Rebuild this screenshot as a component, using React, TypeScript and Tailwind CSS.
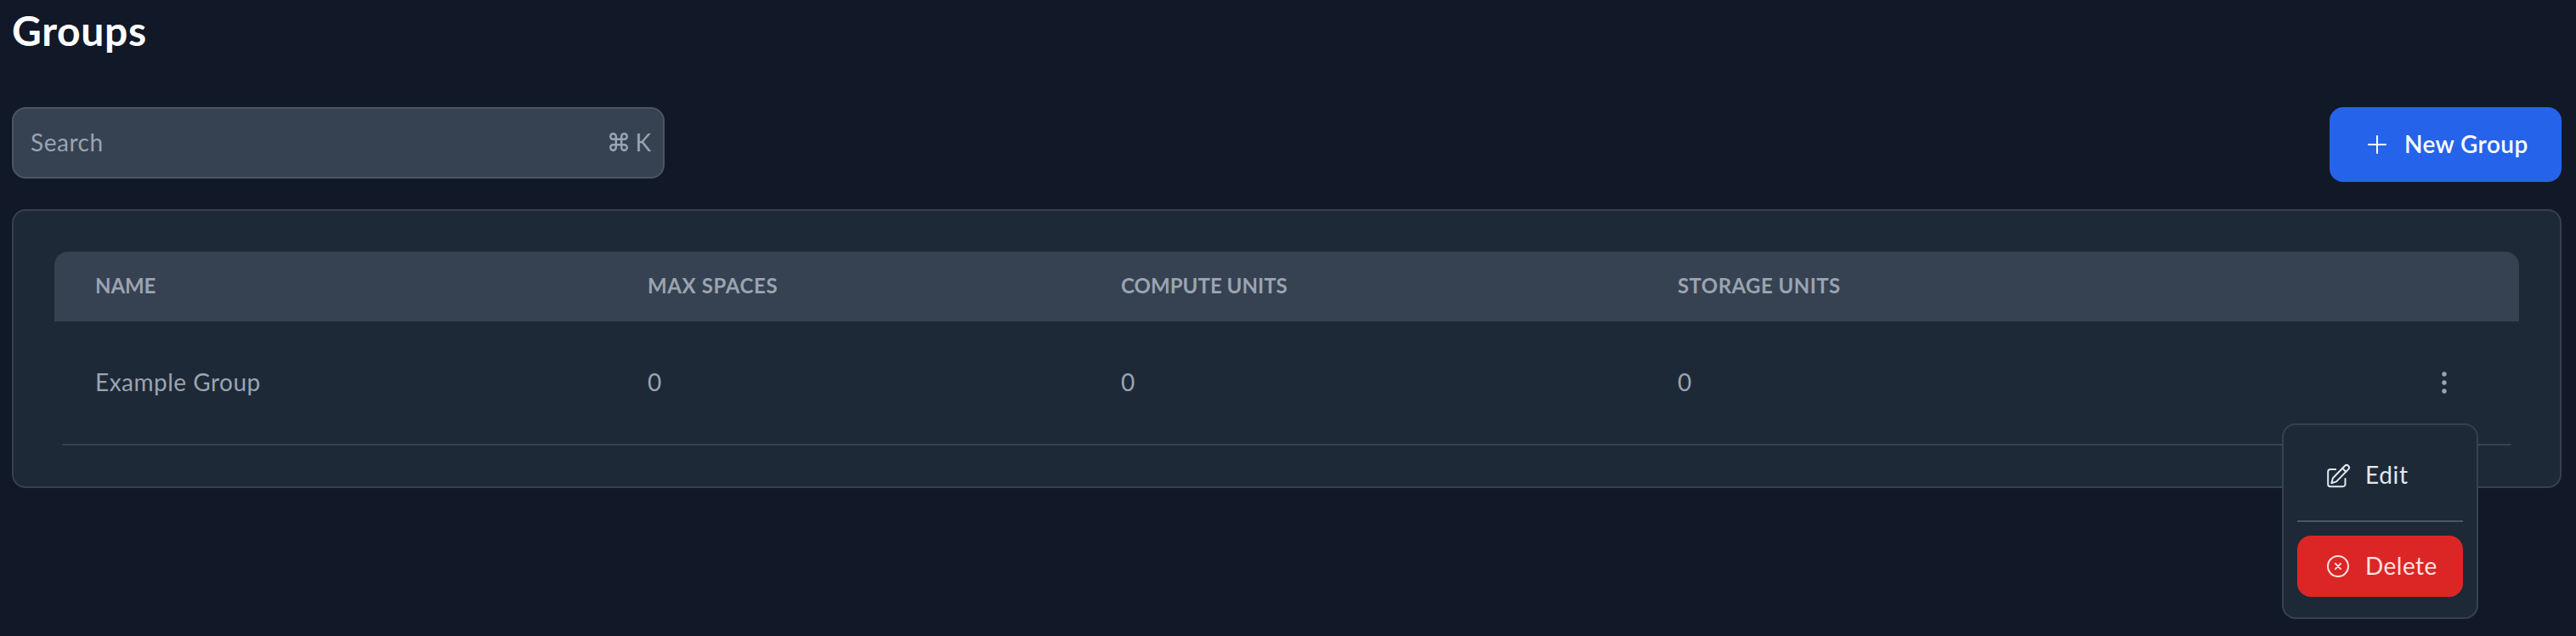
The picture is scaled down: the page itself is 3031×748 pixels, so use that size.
import React from "react";

const cols = "grid grid-cols-[650px_557px_655px_1fr] pl-[48px]";

function CommandIcon() {
  return (
    <svg width="22" height="22" viewBox="0 0 22 22" fill="none" stroke="currentColor" strokeWidth="2.400">
      <path d="M7.800 7.800V4.500A3.300 3.300 0 1 0 4.500 7.800h13A3.300 3.300 0 1 0 14.200 4.500v13a3.300 3.300 0 1 0 3.300-3.300h-13A3.300 3.300 0 1 0 7.800 17.500Z" />
    </svg>
  );
}

function PlusIcon() {
  return (
    <svg width="22" height="22" viewBox="0 0 22 22" stroke="currentColor" strokeWidth="2" strokeLinecap="round">
      <path d="M11 1v20M1 11h20" />
    </svg>
  );
}

function DotsIcon() {
  return (
    <svg width="8" height="28" viewBox="0 0 8 28" fill="currentColor">
      <circle cx="4" cy="4" r="2.700" />
      <circle cx="4" cy="14" r="2.700" />
      <circle cx="4" cy="24" r="2.700" />
    </svg>
  );
}

function EditIcon() {
  return (
    <svg width="29" height="29" viewBox="0 0 29 29" fill="none" stroke="currentColor" strokeWidth="2" strokeLinecap="round" strokeLinejoin="round">
      <path d="M11.200 7H5a2.800 2.800 0 0 0-2.800 2.800V24.400A2.800 2.800 0 0 0 5 27.200h14.700a2.800 2.800 0 0 0 2.800-2.800V18" />
      <path d="M6.300 23.200 8 17.300 22.100 2.800a2.900 2.900 0 0 1 4.100 4.100L12.100 21.400Z" />
      <path d="m19.200 5.800 4 4" />
    </svg>
  );
}

function DeleteIcon() {
  return (
    <svg width="28" height="28" viewBox="0 0 28 28" fill="none" stroke="currentColor" strokeWidth="2" strokeLinecap="round">
      <circle cx="14" cy="14" r="12" />
      <path d="m10.900 10.900 6.200 6.200m0-6.200-6.200 6.200" />
    </svg>
  );
}

export default function App() {
  return (
    <div className="relative flex h-[748px] w-[3031px] flex-col overflow-hidden bg-[#111827] pr-[17px] pl-[14px] font-['Lato','Noto_Sans',sans-serif] text-[28px]">
      <h1 className="h-[126px] pt-[3px] text-[48px] leading-[66px] font-bold tracking-[0.68px] text-white">Groups</h1>

      <div className="flex h-[120px] items-start justify-between">
        <div className="flex h-[84px] w-[768px] items-center justify-between rounded-[16px] border-2 border-[#4b5563] bg-[#364251] pr-[14px] pb-[2px] pl-[20px] text-[#9aa4b2]">
          <span className="tracking-[0.54px]">Search</span>
          <span className="flex items-center gap-[8px]">
            <CommandIcon />
            <span>K</span>
          </span>
        </div>
        <button className="flex h-[88px] w-[273px] items-center gap-[21px] rounded-[16px] bg-[#2563eb] pl-[45px] font-semibold text-white">
          <PlusIcon />
          <span className="pb-[2px] tracking-[0.41px]">New Group</span>
        </button>
      </div>

      <div className="h-[328px] rounded-[16px] border-2 border-[#374151] bg-[#1e2937] p-[48px]">
        <div className={cols + " h-[82px] items-center rounded-t-[16px] bg-[#364251] pb-[3px] text-[24px] font-bold text-[#9aa4b2]"}>
          <span className="tracking-[-0.11px]">NAME</span>
          <span className="tracking-[0.62px]">MAX SPACES</span>
          <span className="tracking-[0.04px]">COMPUTE UNITS</span>
          <span className="tracking-[0.43px]">STORAGE UNITS</span>
        </div>
        <div className={cols + " h-[144px] items-center text-[#9aa4b2]"}>
          <span className="pb-[2px] tracking-[0.49px]">Example Group</span>
          <span className="pb-[2px]">0</span>
          <span className="pb-[2px]">0</span>
          <span className="flex items-center justify-between pr-[84px]">
            <span className="pb-[2px]">0</span>
            <DotsIcon />
          </span>
        </div>
        <div className="mx-[9px] h-[2px] rounded-b-[2px] bg-[#374151]" />
      </div>

      <div className="absolute top-[498px] left-[2685px] flex h-[230px] w-[231px] flex-col rounded-[16px] border-2 border-[#374151] bg-[#1e2937] px-[16px]">
        <button className="flex h-[112px] items-center gap-[17px] pt-[6px] pl-[34px] text-[#e2e8f0]">
          <EditIcon />
          <span className="pb-[2px] tracking-[0.67px]">Edit</span>
        </button>
        <div className="h-[2px] bg-[#4b5563]" />
        <button className="mt-[16px] flex h-[72px] items-center gap-[18px] rounded-[16px] bg-[#dc2626] pl-[34px] text-[#fee2e2]">
          <DeleteIcon />
          <span className="pb-[2px] tracking-[0.47px]">Delete</span>
        </button>
      </div>
    </div>
  );
}
